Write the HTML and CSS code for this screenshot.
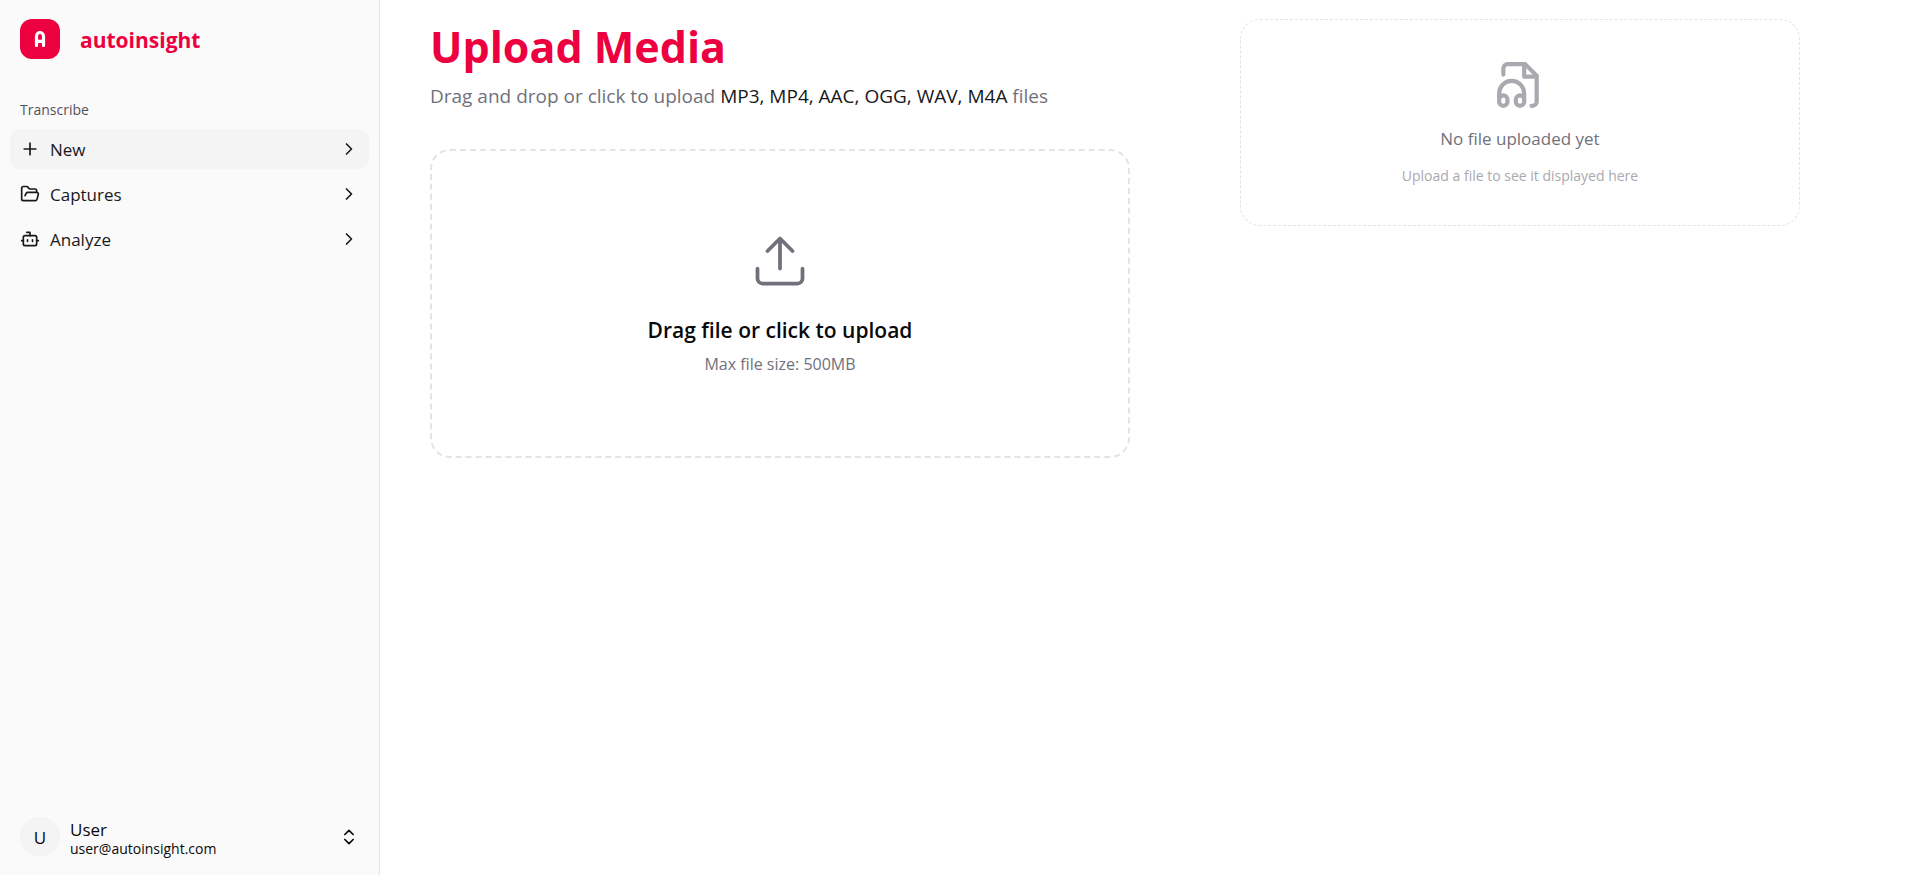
FILE: index.html
```html
<!DOCTYPE html>
<html lang="en">
<head>
<meta charset="utf-8">
<meta name="viewport" content="width=device-width, initial-scale=1">
<title>autoinsight</title>
<link rel="stylesheet" href="styles.css">
</head>
<body>
<div class="app">
  <aside class="sidebar">
    <a class="brand" href="#">
      <svg class="brand-mark" viewBox="0 0 40 40" aria-hidden="true">
        <rect width="40" height="40" rx="12" fill="#ec003f"/>
        <path d="M16.5 26.5V17a3.5 3.5 0 0 1 7 0v9.5M17 22.3h6" fill="none" stroke="#fff" stroke-width="3.2" stroke-linecap="round"/>
      </svg>
      <span class="brand-name">autoinsight</span>
    </a>
    <nav class="nav" aria-labelledby="nav-title">
      <h2 class="nav-title" id="nav-title">Transcribe</h2>
      <a class="nav-item active" href="#">
        <svg class="icon" viewBox="0 0 24 24" aria-hidden="true"><path d="M5 12h14M12 5v14"/></svg>
        <span class="nav-label">New</span>
        <svg class="icon" viewBox="0 0 24 24" aria-hidden="true"><path d="m9 18 6-6-6-6"/></svg>
      </a>
      <a class="nav-item" href="#">
        <svg class="icon" viewBox="0 0 24 24" aria-hidden="true"><path d="m6 14 1.5-2.9A2 2 0 0 1 9.24 10H20a2 2 0 0 1 1.94 2.5l-1.54 6a2 2 0 0 1-1.95 1.5H4a2 2 0 0 1-2-2V5a2 2 0 0 1 2-2h3.9a2 2 0 0 1 1.69.9l.81 1.2a2 2 0 0 0 1.67.9H18a2 2 0 0 1 2 2v2"/></svg>
        <span class="nav-label">Captures</span>
        <svg class="icon" viewBox="0 0 24 24" aria-hidden="true"><path d="m9 18 6-6-6-6"/></svg>
      </a>
      <a class="nav-item" href="#">
        <svg class="icon" viewBox="0 0 24 24" aria-hidden="true"><path d="M12 8V4H8M2 14h2M20 14h2M15 13v2M9 13v2"/><rect x="4" y="8" width="16" height="12" rx="2"/></svg>
        <span class="nav-label">Analyze</span>
        <svg class="icon" viewBox="0 0 24 24" aria-hidden="true"><path d="m9 18 6-6-6-6"/></svg>
      </a>
    </nav>
    <button class="account" type="button">
      <span class="avatar">U</span>
      <span class="account-text">
        <span class="account-name">User</span>
        <span class="account-mail">user@autoinsight.com</span>
      </span>
      <svg class="icon" viewBox="0 0 24 24" aria-hidden="true"><path d="m7 15 5 5 5-5M7 9l5-5 5 5"/></svg>
    </button>
  </aside>
  <main class="main">
    <section class="upload">
      <h1 class="title">Upload Media</h1>
      <p class="subtitle">Drag and drop or click to upload <span class="formats">MP3, MP4, AAC, OGG, WAV, M4A</span> files</p>
      <button class="dropzone" type="button">
        <svg class="upload-icon" viewBox="0 0 24 24" aria-hidden="true"><path d="M21 15v4a2 2 0 0 1-2 2H5a2 2 0 0 1-2-2v-4M17 8l-5-5-5 5M12 3v12"/></svg>
        <span class="dropzone-title">Drag file or click to upload</span>
        <span class="dropzone-note">Max file size: 500MB</span>
      </button>
    </section>
    <section class="empty">
      <svg class="file-icon" viewBox="0 0 24 24" aria-hidden="true">
        <path d="M4 7V4a2 2 0 0 1 2-2h8.5L20 7.5V20a2 2 0 0 1-2 2h-.5"/>
        <path d="M14 2v6h6"/>
        <path d="M2 19a2 2 0 1 1 4 0v1a2 2 0 1 1-4 0v-4a6 6 0 0 1 12 0v4a2 2 0 1 1-4 0v-1a2 2 0 1 1 4 0"/>
      </svg>
      <p class="empty-title">No file uploaded yet</p>
      <p class="empty-note">Upload a file to see it displayed here</p>
    </section>
  </main>
</div>
</body>
</html>
```
FILE: styles.css
```css
* { box-sizing: border-box; }

body {
  margin: 0;
  background: #fff;
  color: #09090b;
  font-family: "Open Sans", "Noto Sans", sans-serif;
  font-size: 17px;
}

h1, h2, p { margin: 0; }

a { color: inherit; text-decoration: none; }

button {
  font: inherit;
  color: inherit;
  background: none;
  border: 0;
  padding: 0;
  cursor: pointer;
}

.app { display: flex; min-height: 100vh; }

.sidebar {
  display: flex;
  flex-direction: column;
  flex: 0 0 380px;
  padding: 19px 10px 8px;
  background: #fafafa;
  border-right: 1px solid #e4e4e7;
}

.brand {
  display: flex;
  align-items: center;
  gap: 20px;
  padding: 0 10px;
  color: #ec003f;
}

.brand-mark { width: 40px; height: 40px; }

.brand-name { padding-top: 2px; font-size: 21px; line-height: 38px; font-weight: 700; }

.nav {
  display: flex;
  flex-direction: column;
  gap: 5px;
  flex: 1;
  padding-top: 36px;
}

.nav-title {
  padding: 0 10px;
  color: #52525b;
  font-size: 14px;
  line-height: 30px;
  font-weight: 400;
}

.nav-item {
  display: flex;
  align-items: center;
  gap: 10px;
  padding: 0 10px;
  border-radius: 10px;
  color: #18181b;
}

.nav-title + .nav-item { margin-top: -1px; }

.nav-item.active { background: #f4f4f5; }

.nav-label { flex: 1; padding-top: 2px; line-height: 38px; }

.icon {
  width: 20px;
  height: 20px;
  fill: none;
  stroke: currentColor;
  stroke-width: 2;
  stroke-linecap: round;
  stroke-linejoin: round;
}

.account {
  display: flex;
  align-items: center;
  gap: 10px;
  padding: 9px 10px;
  text-align: left;
}

.avatar {
  width: 40px;
  height: 40px;
  padding-top: 2px;
  border-radius: 50%;
  background: #f4f4f5;
  line-height: 38px;
  text-align: center;
}

.account-text {
  display: flex;
  flex-direction: column;
  flex: 1;
  padding-top: 4px;
  line-height: 19px;
}

.account-mail { font-size: 14px; }

.main {
  display: grid;
  grid-template-columns: 5fr 4fr;
  gap: 110px;
  align-items: start;
  flex: 1;
  min-width: 0;
  padding: 19px 108px 19px 50px;
}

.title {
  color: #ec003f;
  font-size: 43px;
  line-height: 56px;
  font-weight: 700;
}

.subtitle {
  padding-bottom: 32px;
  color: #71717b;
  font-size: 19px;
  line-height: 42px;
}

.formats { color: #18181b; }

.dropzone {
  display: flex;
  flex-direction: column;
  align-items: center;
  width: 100%;
  padding: 80px 20px 76px;
  border: 2px dashed #e4e4e7;
  border-radius: 20px;
}

.upload-icon {
  width: 60px;
  height: 60px;
  margin-bottom: 20px;
  fill: none;
  stroke: #71717b;
  stroke-width: 1.5;
  stroke-linecap: round;
  stroke-linejoin: round;
}

.dropzone-title { font-size: 21px; line-height: 38px; font-weight: 600; }

.dropzone-note { color: #71717b; font-size: 16px; line-height: 31px; }

.empty {
  display: flex;
  flex-direction: column;
  align-items: center;
  padding: 40px 20px 35px;
  border: 1px dashed #e4e4e7;
  border-radius: 20px;
}

.file-icon {
  width: 50px;
  height: 50px;
  margin-bottom: 15px;
  fill: none;
  stroke: #71717b;
  opacity: 0.6;
  stroke-width: 2;
  stroke-linecap: round;
  stroke-linejoin: round;
}

.empty-title { color: #71717b; font-size: 17px; line-height: 28px; }

.empty-note {
  padding-top: 9px;
  color: #a9a9ae;
  font-size: 14px;
  line-height: 28px;
}
```
